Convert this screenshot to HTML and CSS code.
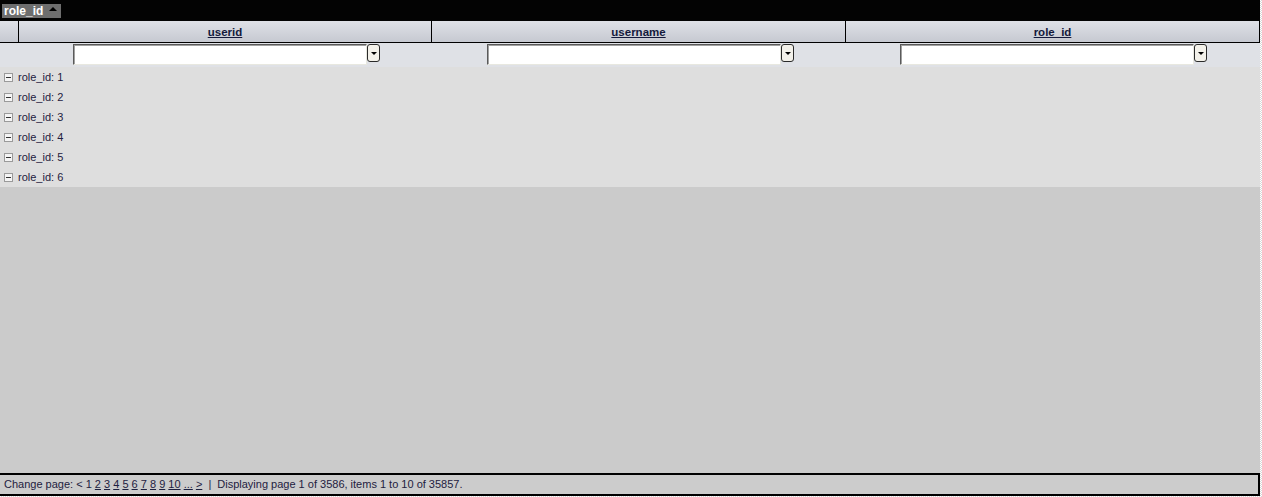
FILE: index.html
```html
<!DOCTYPE html>
<html lang="en">
<head>
  <meta charset="UTF-8">
  <title>Grid</title>
  <link rel="stylesheet" href="styles.css">
</head>
<body>

<div id="grid">
  <div class="groupPanel">
    <span class="groupChip">role_id <span class="sortUp"></span></span>
  </div>

  <div class="headRow">
    <div class="cell indent"></div>
    <div class="cell"><a href="#">userid</a></div>
    <div class="cell"><a href="#">username</a></div>
    <div class="cell last"><a href="#">role_id</a></div>
  </div>

  <div class="filterRow">
    <div class="indent"></div>
    <div class="filterCell"><input type="text"><span class="filterBtn"></span></div>
    <div class="filterCell"><input type="text"><span class="filterBtn"></span></div>
    <div class="filterCell"><input type="text"><span class="filterBtn"></span></div>
  </div>

  <div class="groups">
    <div class="group"><span class="collapse"></span>role_id: 1</div>
    <div class="group"><span class="collapse"></span>role_id: 2</div>
    <div class="group"><span class="collapse"></span>role_id: 3</div>
    <div class="group"><span class="collapse"></span>role_id: 4</div>
    <div class="group"><span class="collapse"></span>role_id: 5</div>
    <div class="group"><span class="collapse"></span>role_id: 6</div>
  </div>

  <div class="empty"></div>

  <div class="pager">Change page: &lt; 1 <a href="#">2</a> <a href="#">3</a> <a href="#">4</a> <a href="#">5</a> <a href="#">6</a> <a href="#">7</a> <a href="#">8</a> <a href="#">9</a> <a href="#">10</a> <a href="#">...</a> <a href="#">&gt;</a> <span class="sep">|</span> Displaying page 1 of 3586, items 1 to 10 of 35857.</div>
</div>

</body>
</html>
```

FILE: styles.css
```css
html {
  background: repeating-conic-gradient(#d8d8d8 0 25%, #ffffff 0 50%) 0 0 / 2px 2px;
}

body {
  margin: 0;
  font-family: 'Liberation Sans', Arial, sans-serif;
  font-size: 11px;
  color: #1e2140;
}

#grid {
  width: 1260px;
  height: 496px;
  display: flex;
  flex-direction: column;
  background-color: #cbcbcb;
}

.groupPanel {
  height: 21px;
  flex-shrink: 0;
  background-color: #030303;
  display: flex;
  align-items: center;
  padding-left: 2px;
}

.groupChip {
  display: flex;
  align-items: center;
  gap: 6px;
  height: 14px;
  padding: 0 4px 0 2px;
  background-color: #6e6e6e;
  color: #fff;
  font-weight: bold;
  font-size: 12px;
}

.sortUp {
  width: 0;
  height: 0;
  border-left: 4px solid transparent;
  border-right: 4px solid transparent;
  border-bottom: 4px solid #000;
  margin-top: -3px;
}

.headRow {
  display: grid;
  grid-template-columns: 19px 413px 414px 413px;
  height: 21px;
  flex-shrink: 0;
  background: linear-gradient(#dfe1e7, #c6c9d1);
  border-bottom: 1px solid #000;
  border-right: 1px solid #000;
}

.headRow .cell {
  display: flex;
  align-items: center;
  justify-content: center;
  border-right: 1px solid #000;
}

.headRow .cell.last {
  border-right: none;
}

.headRow a {
  color: #141a3c;
  font-weight: bold;
  font-size: 11.5px;
  text-decoration: underline;
}

.filterRow {
  display: grid;
  grid-template-columns: 20px 413px 414px 413px;
  height: 24px;
  flex-shrink: 0;
  background-color: #dfe1e6;
}

.filterCell {
  display: flex;
  align-items: flex-start;
  justify-content: center;
  padding-top: 1px;
}

.filterCell input {
  width: 294px;
  height: 21px;
  box-sizing: border-box;
  margin: 0;
  border: 1px solid;
  border-color: #5a5a5a #e8e8e0 #e8e8e0 #5a5a5a;
  box-shadow: inset 1px 1px 0 #a0a0a0;
  background-color: #fff;
}

.filterBtn {
  position: relative;
  width: 13px;
  height: 18px;
  box-sizing: border-box;
  border: 1px solid #2a2a2a;
  border-radius: 3px;
  background-color: #f3f1ea;
}

.filterBtn::after {
  content: "";
  position: absolute;
  left: 3px;
  top: 7px;
  border-left: 3px solid transparent;
  border-right: 3px solid transparent;
  border-top: 3px solid #000;
}

.groups {
  background-color: #dedede;
}

.group {
  height: 20px;
  display: flex;
  align-items: center;
  padding-left: 4px;
  gap: 5px;
}

.collapse {
  position: relative;
  width: 9px;
  height: 9px;
  box-sizing: border-box;
  border: 1px solid #9a9a9a;
  background-color: #f4f4f4;
}

.collapse::after {
  content: "";
  position: absolute;
  left: 1px;
  top: 3px;
  width: 5px;
  height: 1px;
  background-color: #333;
}

.empty {
  flex: 1;
}

.pager {
  height: 19px;
  flex-shrink: 0;
  line-height: 19px;
  padding-left: 4px;
  border-top: 2px solid #000;
  border-bottom: 2px solid #000;
  border-right: 2px solid #000;
  background-color: #cccccc;
  white-space: nowrap;
}

.pager a {
  color: #1e2140;
  text-decoration: underline;
}

.pager .sep {
  margin: 0 3px;
}
```
